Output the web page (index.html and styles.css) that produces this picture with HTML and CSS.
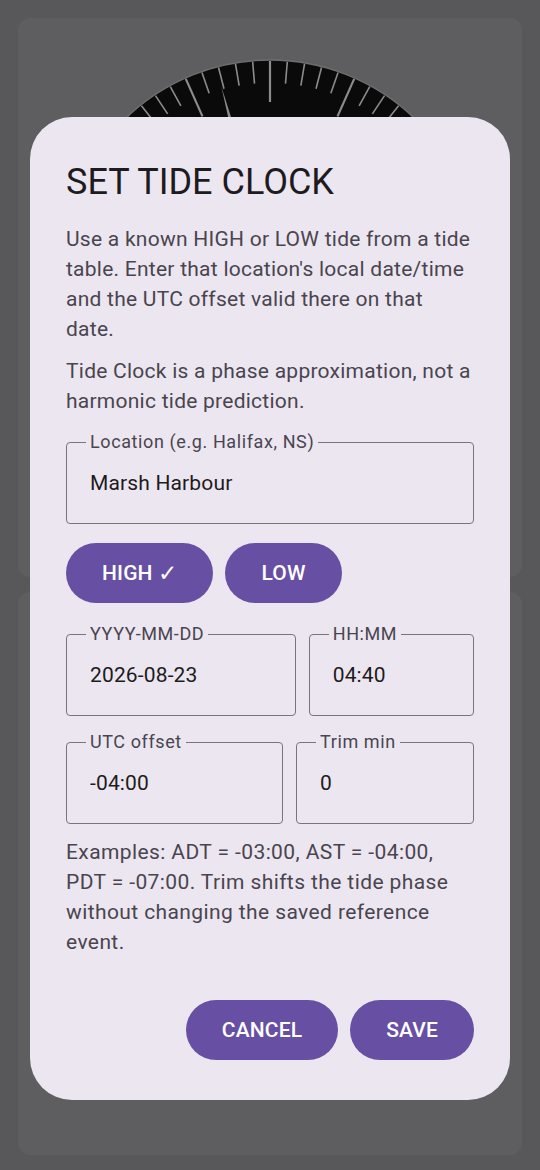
FILE: index.html
```
<!DOCTYPE html>
<html lang="en">
<head>
<meta charset="utf-8">
<title>Set Tide Clock</title>
<link rel="stylesheet" href="styles.css">
</head>
<body>
<main class="screen">
  <section class="card card-top">
    <svg class="dial" width="420" height="420" viewBox="-210 -210 420 420" aria-hidden="true">
      <circle r="208" fill="#0a0a0a" stroke="#6e6e70" stroke-width="1.5"/>
      <g stroke="#8c8c8c" stroke-width="1.6" stroke-linecap="butt">
        <line x1="0" y1="-207" x2="0" y2="-166" stroke-width="2.2"/>
        <line x1="0" y1="-207" x2="0" y2="-185" transform="rotate(4.8)"/>
        <line x1="0" y1="-207" x2="0" y2="-185" transform="rotate(9.6)"/>
        <line x1="0" y1="-207" x2="0" y2="-185" transform="rotate(14.4)"/>
        <line x1="0" y1="-207" x2="0" y2="-185" transform="rotate(19.2)"/>
        <line x1="0" y1="-207" x2="0" y2="-166" transform="rotate(24)" stroke-width="2.2"/>
        <line x1="0" y1="-207" x2="0" y2="-185" transform="rotate(28.8)"/>
        <line x1="0" y1="-207" x2="0" y2="-185" transform="rotate(33.6)"/>
        <line x1="0" y1="-207" x2="0" y2="-185" transform="rotate(38.4)"/>
        <line x1="0" y1="-207" x2="0" y2="-185" transform="rotate(43.2)"/>
        <line x1="0" y1="-207" x2="0" y2="-166" transform="rotate(48)" stroke-width="2.2"/>
        <line x1="0" y1="-207" x2="0" y2="-185" transform="rotate(-4.8)"/>
        <line x1="0" y1="-207" x2="0" y2="-185" transform="rotate(-9.6)"/>
        <line x1="0" y1="-207" x2="0" y2="-185" transform="rotate(-14.4)"/>
        <line x1="0" y1="-207" x2="0" y2="-185" transform="rotate(-19.2)"/>
        <line x1="0" y1="-207" x2="0" y2="-166" transform="rotate(-24)" stroke-width="2.2"/>
        <line x1="0" y1="-207" x2="0" y2="-185" transform="rotate(-28.8)"/>
        <line x1="0" y1="-207" x2="0" y2="-185" transform="rotate(-33.6)"/>
        <line x1="0" y1="-207" x2="0" y2="-185" transform="rotate(-38.4)"/>
        <line x1="0" y1="-207" x2="0" y2="-185" transform="rotate(-43.2)"/>
        <line x1="0" y1="-207" x2="0" y2="-166" transform="rotate(-48)" stroke-width="2.2"/>
      </g>
      <polygon points="0,-188 -2.6,-130 2.6,-130" fill="#8a8a8a" transform="rotate(-15)"/>
      <text x="0" y="-132" text-anchor="middle" class="dial-text">1012</text>
    </svg>
  </section>
  <section class="card card-bottom"></section>

  <div class="dialog" role="dialog" aria-labelledby="dlg-title">
    <h1 class="dialog-title" id="dlg-title">SET TIDE CLOCK</h1>
    <p class="body-text intro">Use a known HIGH or LOW tide from a tide table. Enter that location's local date/time and the UTC offset valid there on that date.</p>
    <p class="body-text note">Tide Clock is a phase approximation, not a harmonic tide prediction.</p>

    <div class="field field-location">
      <span class="field-label">Location (e.g. Halifax, NS)</span>
      <span class="field-value">Marsh Harbour</span>
    </div>

    <div class="toggle-row">
      <button class="pill">HIGH <span class="check">✓</span></button>
      <button class="pill">LOW</button>
    </div>

    <div class="field-row row-date">
      <div class="field">
        <span class="field-label">YYYY-MM-DD</span>
        <span class="field-value">2026-08-23</span>
      </div>
      <div class="field">
        <span class="field-label">HH:MM</span>
        <span class="field-value">04:40</span>
      </div>
    </div>

    <div class="field-row row-offset">
      <div class="field">
        <span class="field-label">UTC offset</span>
        <span class="field-value">-04:00</span>
      </div>
      <div class="field">
        <span class="field-label">Trim min</span>
        <span class="field-value">0</span>
      </div>
    </div>

    <p class="body-text examples">Examples: ADT = -03:00, AST = -04:00, PDT = -07:00. Trim shifts the tide phase without changing the saved reference event.</p>

    <div class="actions">
      <button class="pill">CANCEL</button>
      <button class="pill">SAVE</button>
    </div>
  </div>
</main>
</body>
</html>
```
FILE: styles.css
```
* {
  box-sizing: border-box;
}

html, body {
  margin: 0;
  padding: 0;
}

body {
  background: #58585a;
  font-family: Roboto, "Noto Sans", "DejaVu Sans", sans-serif;
  width: 540px;
  height: 1170px;
  overflow: hidden;
}

.screen {
  position: relative;
  height: 1170px;
  padding: 18px 18px 15px;
  display: grid;
  grid-template-rows: 559px 1fr;
  row-gap: 15px;
}

.card {
  background: #5e5e60;
  border-radius: 12px;
  overflow: hidden;
}

.card-top {
  display: flex;
  justify-content: center;
  padding-top: 40px;
}

.dial {
  display: block;
  flex: none;
}

.dial-text {
  font-family: Roboto, sans-serif;
  font-size: 24px;
  font-weight: 500;
  fill: #8a8a8a;
}

.dialog {
  position: absolute;
  top: 117px;
  left: 30px;
  width: 480px;
  background: #ece6f0;
  border-radius: 42px;
  padding: 43px 36px 40px;
}

.dialog-title {
  margin: 0;
  font-size: 36px;
  line-height: 44px;
  font-weight: 400;
  color: #1d1b20;
}

.body-text {
  margin: 0;
  font-size: 21px;
  line-height: 30px;
  letter-spacing: 0.25px;
  color: #49454f;
}

.intro {
  margin-top: 20px;
}

.note {
  margin-top: 12px;
}

.field {
  position: relative;
  height: 82px;
  min-width: 0;
  border: 1px solid #79747e;
  border-radius: 4px;
  display: flex;
  align-items: center;
  padding-left: 23px;
}

.field-label {
  position: absolute;
  top: -11px;
  left: 19px;
  padding: 0 4px;
  background: #ece6f0;
  font-size: 18px;
  line-height: 20px;
  letter-spacing: 0.6px;
  color: #49454f;
  white-space: nowrap;
}

.field-value {
  font-size: 21px;
  letter-spacing: 0.15px;
  color: #1d1b20;
}

.field-location {
  margin-top: 26px;
}

.toggle-row {
  margin-top: 19px;
  display: flex;
  gap: 12px;
}

.pill {
  height: 60px;
  padding: 0 36px;
  border: none;
  border-radius: 30px;
  background: #6750a4;
  color: #ffffff;
  font-family: Roboto, "DejaVu Sans", sans-serif;
  font-size: 21px;
  font-weight: 500;
  letter-spacing: 0.15px;
  display: flex;
  align-items: center;
  justify-content: center;
  white-space: pre;
}

.check {
  font-family: "DejaVu Sans", sans-serif;
  font-size: 23px;
  font-weight: 400;
}

.field-row {
  display: grid;
  column-gap: 13px;
}

.row-date {
  margin-top: 31px;
  grid-template-columns: 1.39fr 1fr;
}

.row-offset {
  margin-top: 26px;
  grid-template-columns: 1.22fr 1fr;
}

.examples {
  margin-top: 13px;
  letter-spacing: 0.4px;
}

.actions {
  margin-top: 43px;
  display: flex;
  justify-content: flex-end;
  gap: 12px;
}
```
